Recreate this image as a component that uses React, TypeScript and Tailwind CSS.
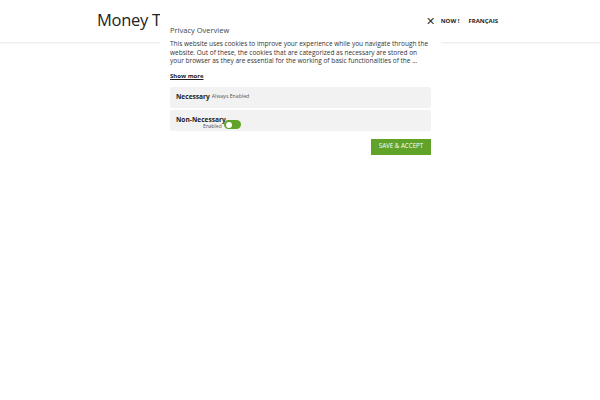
import React, { useState } from 'react';

const font = "font-['Open_Sans',_'Liberation_Sans',_sans-serif]";

function Toggle({ on, onClick }: { on: boolean; onClick: () => void }) {
  return (
    <button
      onClick={onClick}
      className={`relative h-[9px] w-[17px] rounded-full ${on ? 'bg-[#61a229]' : 'bg-[#cccccc]'}`}
    >
      <span
        className={`absolute top-[1.5px] size-[6px] rounded-full bg-white ${on ? 'left-[2px]' : 'left-[9px]'}`}
      />
    </button>
  );
}

function CategoryRow({ children }: { children: React.ReactNode }) {
  return (
    <div className="flex h-[21px] w-full items-center rounded-[2px] bg-[#f2f2f2] px-[6px]">
      {children}
    </div>
  );
}

function CookieModal() {
  const [enabled, setEnabled] = useState(true);

  return (
    <div className={`absolute left-[160px] top-[10px] w-[281px] bg-white px-[10px] pt-[15px] pb-[10px] ${font}`}>
      <button className="absolute right-[6px] top-[5px] text-[11px] leading-none text-[#333]">✕</button>
      <p className="text-[7.5px] leading-[10px] text-[#444]">Privacy Overview</p>
      <p className="mt-[5px] whitespace-nowrap text-[6.5px] leading-[8.5px] text-[#333]">
        This website uses cookies to improve your experience while you navigate through the
        <br />
        website. Out of these, the cookies that are categorized as necessary are stored on
        <br />
        your browser as they are essential for the working of basic functionalities of the ...
      </p>
      <p className="mt-[6px] text-[6px] font-bold leading-[8px] text-[#222] underline">Show more</p>

      <div className="mt-[7px] flex flex-col gap-[2px]">
        <CategoryRow>
          <span className="text-[6.6px] font-bold text-[#222]">Necessary</span>
          <span className="ml-[2px] text-[5.2px] text-[#555]">Always Enabled</span>
        </CategoryRow>
        <CategoryRow>
          <div className="flex flex-col items-end pt-[4px]">
            <span className="text-[6.6px] font-bold leading-[7px] text-[#222]">Non-Necessary</span>
            <span className="mr-[4px] text-[5px] leading-[6px] text-[#555]">Enabled</span>
          </div>
          <div className="-ml-[2px] mt-[9px] flex">
            <Toggle on={enabled} onClick={() => setEnabled(!enabled)} />
          </div>
        </CategoryRow>
      </div>

      <div className="mt-[8px] flex justify-end">
        <button className="h-[16px] w-[60px] bg-[#61a229] text-[6.2px] uppercase leading-none text-white">
          Save &amp; Accept
        </button>
      </div>
    </div>
  );
}

export default function App() {
  return (
    <div className={`relative h-[400px] w-[600px] bg-white ${font}`}>
      <header className="flex h-[43px] items-center border-b border-[#eeeeee] shadow-[0_1px_2px_rgba(0,0,0,0.04)] pl-[97px] pr-[102px]">
        <span className="whitespace-nowrap pb-[2px] text-[16.5px] leading-none tracking-[-0.3px] text-[#222]">
          Money T
        </span>
        <nav className="ml-auto flex items-center gap-[9px] text-[6px] font-bold text-[#222]">
          <span>NOW !</span>
          <span>FRANÇAIS</span>
        </nav>
      </header>
      <CookieModal />
    </div>
  );
}
